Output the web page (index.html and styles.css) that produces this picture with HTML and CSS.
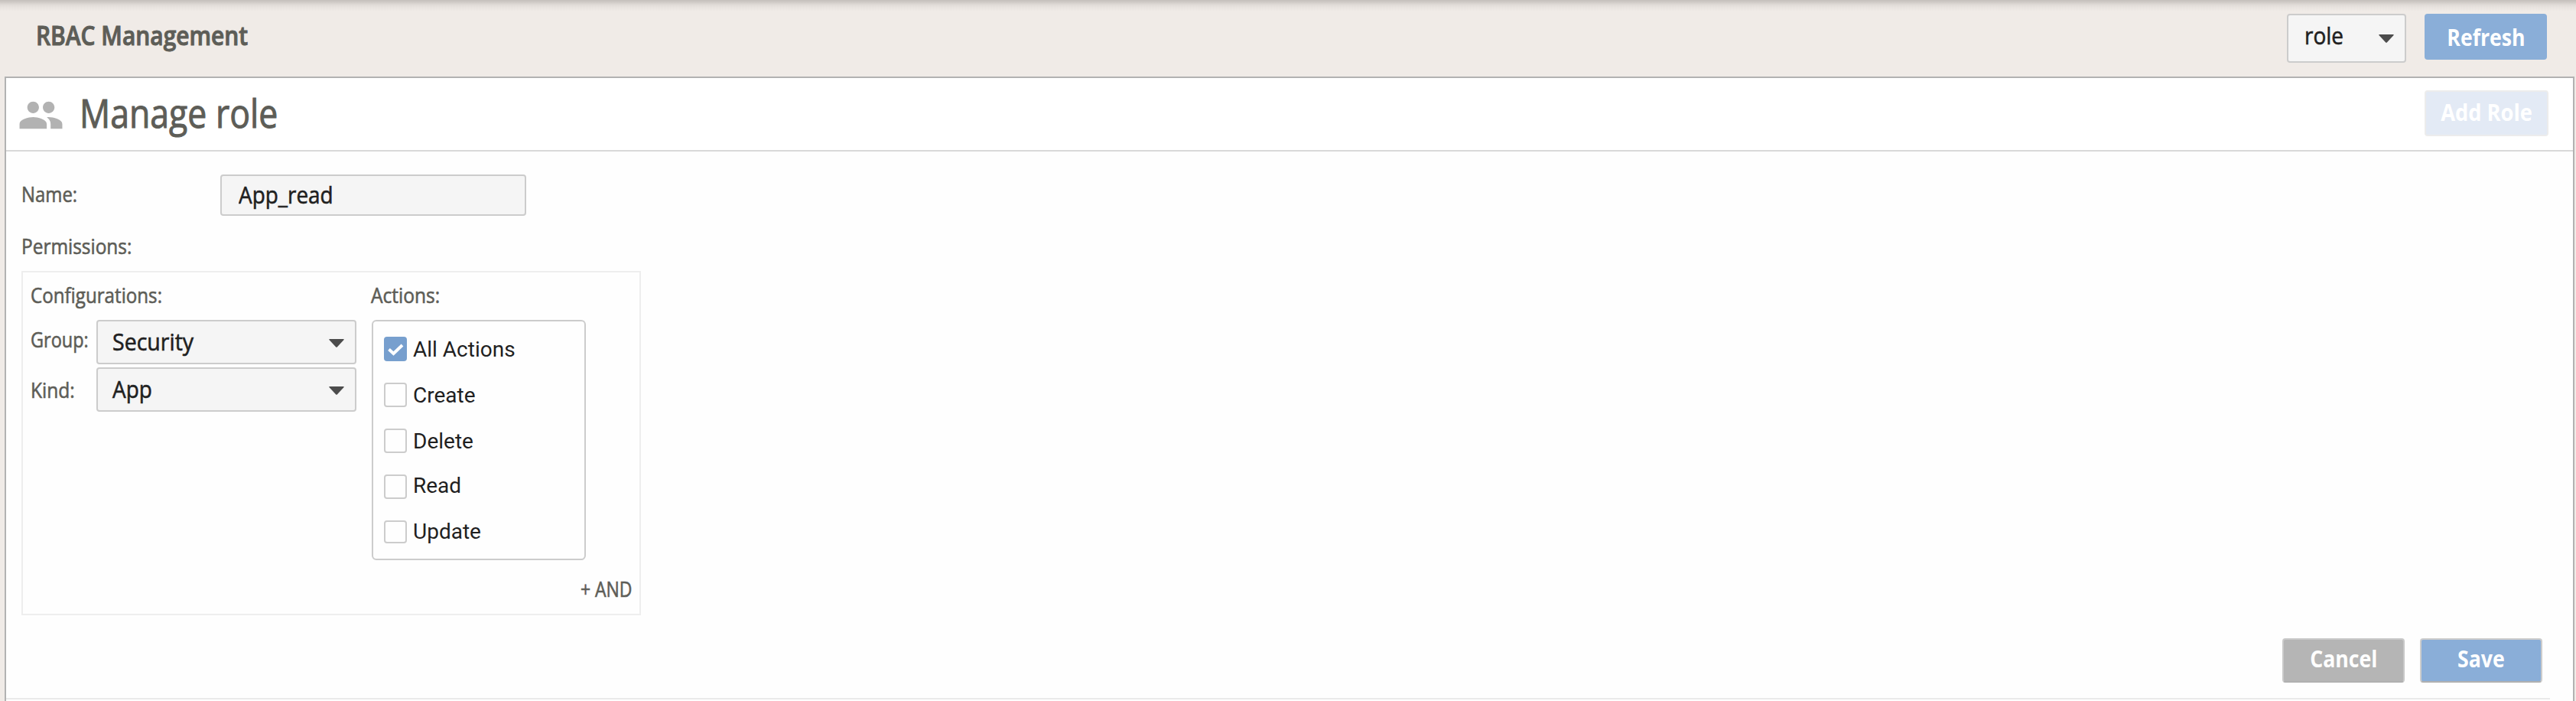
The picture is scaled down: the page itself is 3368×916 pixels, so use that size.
FILE: index.html
```html
<!DOCTYPE html>
<html lang="en">
<head>
<meta charset="utf-8">
<title>RBAC Management</title>
<link rel="stylesheet" href="styles.css">
</head>
<body>
<header class="topbar">
  <h1 class="topbar-title">RBAC Management</h1>
  <div class="topbar-tools">
    <div class="select select-type"><span class="value">role</span><svg class="caret" viewBox="0 0 20 11"><path d="M1 0H19Q20.500 0 19.400 1.200L11 10.300Q10 11.400 9 10.300L.6 1.200Q-.5 0 1 0Z"/></svg></div>
    <button class="btn btn-refresh"><span>Refresh</span></button>
  </div>
</header>
<main class="panel">
  <div class="panel-head">
    <svg class="people" viewBox="0 0 24 24"><path d="M16 11c1.660 0 2.990-1.340 2.990-3S17.660 5 16 5s-3 1.340-3 3 1.340 3 3 3zm-8 0c1.660 0 2.990-1.340 2.990-3S9.660 5 8 5 5 6.340 5 8s1.340 3 3 3zm0 2c-2.330 0-7 1.170-7 3.500V19h14v-2.500c0-2.330-4.670-3.500-7-3.500zm8 0c-.29 0-.62.020-.97.050 1.160.84 1.970 1.970 1.970 3.450V19h6v-2.500c0-2.330-4.670-3.500-7-3.500z"/></svg>
    <h2 class="panel-title">Manage role</h2>
    <button class="btn btn-add" disabled><span>Add Role</span></button>
  </div>
  <div class="form">
    <div class="name-row">
      <label class="label name-label" for="name">Name:</label>
      <div class="input"><input id="name" type="text" value="App_read"></div>
    </div>
    <div class="label permissions">Permissions:</div>
    <section class="perm-box">
      <div class="configs">
        <div class="label heading">Configurations:</div>
        <div class="config-row"><span class="label row-label">Group:</span><div class="select select-wide security"><span class="value">Security</span><svg class="caret" viewBox="0 0 20 11"><path d="M1 0H19Q20.500 0 19.400 1.200L11 10.300Q10 11.400 9 10.300L.6 1.200Q-.5 0 1 0Z"/></svg></div></div>
        <div class="config-row kind"><span class="label row-label">Kind:</span><div class="select select-wide"><span class="value">App</span><svg class="caret" viewBox="0 0 20 11"><path d="M1 0H19Q20.500 0 19.400 1.200L11 10.300Q10 11.400 9 10.300L.6 1.200Q-.5 0 1 0Z"/></svg></div></div>
      </div>
      <div class="actions">
        <div class="label heading">Actions:</div>
        <div class="action-list">
          <div class="action"><span class="check checked"><svg viewBox="0 0 30 32"><path d="M6.500 16.500 12.500 22 24 11"/></svg></span><span>All Actions</span></div>
          <div class="action"><span class="check"></span><span>Create</span></div>
          <div class="action"><span class="check"></span><span>Delete</span></div>
          <div class="action raised"><span class="check"></span><span>Read</span></div>
          <div class="action last"><span class="check"></span><span>Update</span></div>
        </div>
      </div>
      <div class="label and-link">+ AND</div>
    </section>
    <div class="form-buttons">
      <button class="btn btn-cancel"><span>Cancel</span></button>
      <button class="btn btn-save"><span>Save</span></button>
    </div>
  </div>
</main>
</body>
</html>
```
FILE: styles.css
```css
* { box-sizing: border-box; }

body {
  margin: 0;
  height: 916px;
  overflow: hidden;
  display: flex;
  flex-direction: column;
  background: #f0ebe7;
  color: #5d5d57;
  font-family: "Open Sans", sans-serif;
}

h1, h2 { margin: 0; }

/* Narrowed lettering: --fit is the horizontal scale of the text. */
.topbar-title, .panel-title, .label, .value, .input input {
  transform: scaleX(var(--fit));
  transform-origin: left center;
  -webkit-text-stroke: .6px currentColor;
}

.btn span { display: inline-block; transform: scaleX(var(--fit)); }

.topbar {
  height: 100px;
  flex: none;
  display: flex;
  justify-content: space-between;
  align-items: flex-start;
  padding: 18px 38px 0 47px;
  background: linear-gradient(#c4bfbb 0, #d0cbc7 3px, #dfdad6 6px, #e9e4e0 10px, #f0ebe7 15px);
}

.topbar-title {
  --fit: .855;
  font-size: 35px;
  font-weight: 600;
  line-height: 55px;
  -webkit-text-stroke-width: 1px;
}

.topbar-tools { display: flex; gap: 24px; }

.select {
  --fit: .9;
  display: flex;
  align-items: center;
  justify-content: space-between;
  background: #f5f5f5;
  border: 2px solid #ccc;
  border-radius: 4px;
  color: #1f1f1f;
  font-size: 31px;
  font-weight: 500;
  line-height: 40px;
}

.select-type {
  width: 156px;
  height: 64px;
  padding: 0 14px 8px 21px;
}

.select-type .caret { margin-top: 8px; }

.caret { width: 20px; height: 11px; fill: #4c4c4c; }

.btn {
  --fit: .86;
  width: 160px;
  height: 60px;
  padding: 0;
  border: 0;
  border-radius: 4px;
  background: #8aaed8;
  color: #fff;
  font-family: inherit;
  font-size: 31px;
  font-weight: 700;
  line-height: 42px;
}

.panel {
  flex: 1;
  margin: 0 2px 0 6px;
  border: 2px solid #b2b2b2;
  border-bottom: 0;
  background: #fefefe;
}

.panel-head {
  height: 96px;
  display: flex;
  align-items: center;
  padding: 0 32px 4px 15px;
  border-bottom: 2px solid #d9d9d9;
  background: #fff;
}

.people { width: 61px; height: 61px; margin-top: 6px; fill: #b2b2b2; }

.panel-title {
  --fit: .875;
  margin-left: 20px;
  font-size: 51px;
  font-weight: 500;
  line-height: 60px;
  -webkit-text-stroke-width: 1px;
}

.btn-add {
  --fit: .88;
  width: 162px;
  margin: 2px 0 0 auto;
  padding-bottom: 4px;
  border: 2px solid #ececec;
  background: #e3eaf5;
}

.form { padding: 30px 30px 0 20px; }

.label {
  --fit: .9;
  font-size: 27px;
  font-weight: 500;
  line-height: 36px;
  white-space: nowrap;
}

.name-row { display: flex; height: 54px; align-items: center; }

.name-label { --fit: .885; width: 260px; margin-top: -3px; }

.input {
  --fit: .9;
  width: 400px;
  height: 54px;
  padding: 0 22px 2px;
  border: 2px solid #ccc;
  border-radius: 4px;
  background: #f5f5f5;
}

.input input {
  width: 100%;
  height: 48px;
  padding: 0;
  border: 0;
  outline: none;
  background: none;
  color: #1f1f1f;
  font: 500 31px "Open Sans", sans-serif;
}

.permissions { --fit: .905; margin-top: 22px; }

.perm-box {
  width: 810px;
  height: 450px;
  margin-top: 14px;
  padding: 12px 10px 0;
  border: 2px solid #eee;
  display: grid;
  grid-template-columns: 428px 1fr;
  grid-template-rows: 384px 36px;
}

.configs { width: 428px; }

.heading { --fit: .895; height: 50px; }

.config-row { display: flex; height: 58px; margin-bottom: 4px; }

.row-label { --fit: .87; flex: none; width: 86px; margin-top: 8px; }

.kind .row-label { --fit: .91; margin-top: 12px; }

.select-wide { width: 340px; height: 58px; padding: 0 14px 2px 19px; }

.select-wide .caret { margin-top: 4px; }

.security { --fit: .92; }

.actions { padding-left: 17px; }

.actions .heading { --fit: .91; }

.action-list {
  width: 280px;
  height: 314px;
  margin-left: 1px;
  padding: 20px 14px 0;
  border: 2px solid #ccc;
  border-radius: 6px;
}

.action {
  display: flex;
  align-items: center;
  gap: 8px;
  height: 32px;
  margin-bottom: 28px;
  color: #1f1f1f;
  font: 28px/32px Roboto, sans-serif;
}

.action span:last-child { padding-top: 1px; }

.raised span:last-child { margin-top: -4px; }

.last, .last .check { height: 30px; }

.last span:last-child { margin-top: -2px; }

.check {
  width: 30px;
  height: 32px;
  border: 2px solid #ccc;
  border-radius: 4px;
}

.checked { border: 0; background: #779fce; }

.checked svg { display: block; fill: none; stroke: #fff; stroke-width: 4; }

.and-link {
  --fit: .85;
  grid-column: 1 / 3;
  justify-self: end;
  transform-origin: right center;
}

.form-buttons {
  display: flex;
  justify-content: flex-end;
  gap: 20px;
  margin-top: 30px;
  padding: 0 10px 20px 0;
  margin-left: -20px;
  border-bottom: 2px solid #eaeaea;
}

.form-buttons .btn { height: 58px; padding-bottom: 6px; }

.btn-cancel { background: #b5b5b5; border: 2px solid #c9c9c9; border-bottom-color: #b0b0b0; }

.btn-save { border: 2px solid #ccc; border-bottom-color: #b0b0b0; }
```
